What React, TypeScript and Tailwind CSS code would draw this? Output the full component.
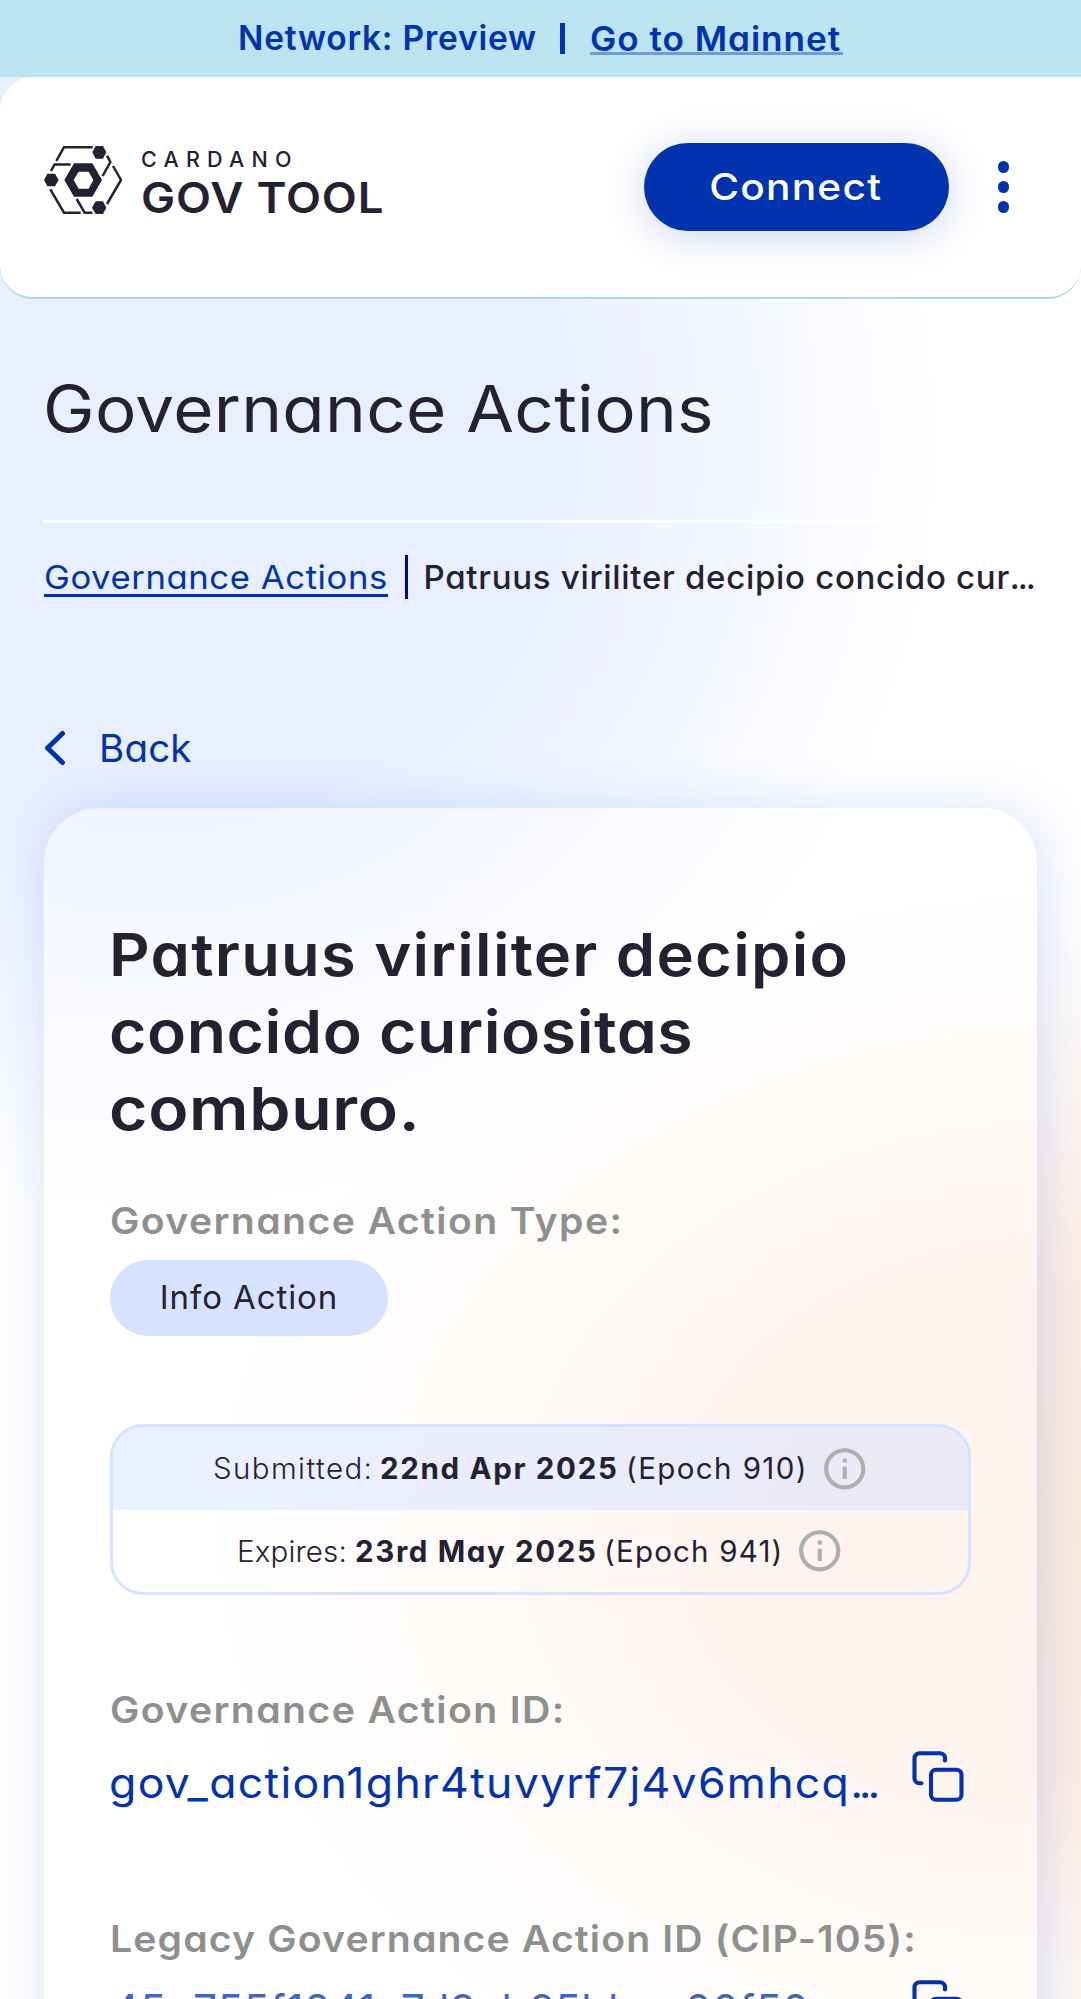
import React from "react";

function Logo() {
  return (
    <svg className="h-[68px] w-[78px]" viewBox="42 48 234 204" fill="none" stroke="#242232" strokeWidth="7.5">
      <path d="M79 93 102 51.5H188M63 123 73.500 103.500H122M61 178 102 248H152M140 207 164 248H187M231 77 241 96 218 138M249 108 273 150 231 222" />
      <g fill="#242232" stroke="none">
        <path d="M187 67 197 48H219L229 67 219 86H197Z" />
        <path d="M42 150 52 131.500H75L86 150 75 169H52Z" />
        <path d="M186 233 197 213.500H219L229 233 219 252H197Z" />
        <path fillRule="evenodd" d="M103 150 132 100H187L216 150 187 200H132ZM131 150 146 176H176L190 150 176 125H146Z" />
      </g>
    </svg>
  );
}

function InfoIcon() {
  return (
    <svg className="size-[49.5px] shrink-0" viewBox="0 0 24 24" fill="#adaead">
      <path d="M11 7h2v2h-2zm0 4h2v6h-2zm1-9C6.480 2 2 6.480 2 12s4.480 10 10 10 10-4.480 10-10S17.520 2 12 2m0 18c-4.410 0-8-3.590-8-8s3.590-8 8-8 8 3.590 8 8-3.590 8-8 8" />
    </svg>
  );
}

function CopyIcon() {
  return (
    <svg className="h-[51px] w-[52px] shrink-0" viewBox="0 0 52 51" fill="none" stroke="#0033ad" strokeWidth="4.1" strokeLinecap="round">
      <path d="M9.500 32.300H7.500a5 5 0 0 1-5-5V7.300a5 5 0 0 1 5-5H28a5 5 0 0 1 5 5V9.500" />
      <rect x="19" y="18.700" width="30.500" height="30" rx="5" />
    </svg>
  );
}

const LABEL =
  "h-[48px] w-max origin-left scale-x-[1.06] text-[37px] leading-[48px] font-semibold whitespace-nowrap text-[#8e908e]";

export default function App() {
  return (
    <div className="h-[1999px] w-[1081px] overflow-hidden bg-white bg-[radial-gradient(ellipse_790px_770px_at_150px_440px,#e8efff_0%,#e8efff_50%,rgba(232,239,255,0.5)_75%,rgba(232,239,255,0)_100%),radial-gradient(ellipse_860px_640px_at_1070px_1530px,#fdebe1_0%,#feede5_38%,rgba(254,238,230,0.45)_70%,rgba(254,238,230,0)_100%)] font-['Inter',sans-serif] text-[#242232] [font-feature-settings:'cv11','ss03']">
      <div className="flex h-[77px] items-center bg-[#bce3f0] pl-[238px] text-[33.5px] leading-none font-semibold whitespace-nowrap text-[#0033ad]">
        <span className="mt-[1px] w-[322px] tracking-[0.75px]">Network: Preview</span>
        <span className="h-[31px] w-[4.500px] bg-[#0033ad]" />
        <span className="ml-[25px] h-[33px] w-[253px] border-b-[3px] border-[#6f9bd8] leading-[34px]">
          <span className="inline-block origin-left scale-x-[1.05] tracking-[0.900px]">Go to Mainnet</span>
        </span>
      </div>

      <header className="flex h-[222px] items-center rounded-[33px] border-b-2 border-[#add8e6] bg-white px-[44px]">
        <div className="flex -translate-y-[7px] items-center">
          <Logo />
          <div className="ml-[19px] flex flex-col whitespace-nowrap">
            <span className="text-[21.500px] leading-[30px] font-medium tracking-[7.200px]">CARDANO</span>
            <span className="mt-[2px] mb-[-1px] origin-left scale-x-[1.06] text-[43px] leading-[42px] font-semibold tracking-[0.800px]">GOV TOOL</span>
          </div>
        </div>
        <button className="ml-auto h-[88px] w-[305px] rounded-full bg-[#0033ad] text-[37px] font-medium tracking-[1.100px] text-white shadow-[0_5px_42px_rgba(0,51,173,0.2)]">
          <span className="inline-block scale-x-[1.1]">Connect</span>
        </button>
        <div className="mr-[28px] ml-[49px] flex flex-col gap-[8.500px]">
          <i className="size-[11.500px] rounded-full bg-[#0033ad]" />
          <i className="size-[11.500px] rounded-full bg-[#0033ad]" />
          <i className="size-[11.500px] rounded-full bg-[#0033ad]" />
        </div>
      </header>

      <main className="px-[44px] pt-[62px]">
        <h1 className="-ml-px h-[96px] w-max origin-left scale-x-[1.08] text-[64px] leading-[96px] font-normal tracking-[0.300px] whitespace-nowrap">Governance Actions</h1>
        <div className="mt-[63px] h-[3px] bg-white" />
        <nav className="mt-[32px] flex h-[44px] items-center whitespace-nowrap">
          <a className="mt-[2px] h-[38px] w-[344px] border-b-[3px] border-[#0033ad] text-[33px] leading-[37px] text-[#0033ad]">
            <span className="inline-block origin-left scale-x-[1.05] tracking-[0.550px]">Governance Actions</span>
          </a>
          <span className="ml-[17px] h-[44px] w-[2.500px] bg-[#00078c]" />
          <span className="ml-[16px] text-[33px] leading-[44px] font-medium tracking-[0.700px]">
            Patruus viriliter decipio concido cur<span className="tracking-[-2px]">...</span>
          </span>
        </nav>

        <a className="mt-[128px] flex h-[42px] items-center text-[#0033ad]">
          <svg className="h-[36px] w-[22px]" viewBox="0 0 22 36" fill="none" stroke="#0033ad" strokeWidth="5" strokeLinecap="round" strokeLinejoin="round">
            <path d="M18.500 3.500 3.500 18 18.500 32.500" />
          </svg>
          <span className="ml-[33px] text-[38.500px] leading-[42px] tracking-[0.200px]">Back</span>
        </a>

        <section className="mt-[39px] h-[1400px] rounded-[55px] bg-white/40 px-[66px] pt-[108px] shadow-[5px_5px_55px_rgba(47,98,220,0.2)]">
          <h2 className="-ml-px text-[59px] leading-[77px] font-semibold whitespace-nowrap">
            <span className="block origin-left scale-x-[1.07] tracking-[1.200px]">Patruus viriliter decipio</span>
            <span className="block origin-left scale-x-[1.09] tracking-[0.500px]">concido curiositas</span>
            <span className="block origin-left scale-x-[1.12] tracking-[0.600px]">comburo.</span>
          </h2>
          <p className={`mt-[50px] tracking-[1.300px] ${LABEL}`}>Governance Action Type:</p>
          <div className="mt-[15px] flex h-[76px] w-[278px] items-center justify-center rounded-full bg-[#d6e2ff] text-[33px] tracking-[0.900px] whitespace-nowrap">
            Info Action
          </div>

          <div className="mt-[88px] h-[171px] overflow-hidden rounded-[33px] border-[3px] border-[#d6e2ff] text-[29.500px] whitespace-nowrap">
            <div className="flex h-[83px] items-center bg-[#d6e2ff]/50 pl-[100px]">
              <span className="w-[167px] font-light tracking-[1.400px]">Submitted:</span>
              <b className="w-[246px] font-bold tracking-[1.680px]">22nd Apr 2025</b>
              <span className="w-[194px] tracking-[1.400px]">(Epoch 910)</span>
              <InfoIcon />
            </div>
            <div className="flex h-[82px] items-center pl-[124px]">
              <span className="w-[118px] font-light tracking-[0.160px]">Expires:</span>
              <b className="w-[249px] font-bold tracking-[1.630px]">23rd May 2025</b>
              <span className="w-[191px] tracking-[1.200px]">(Epoch 941)</span>
              <InfoIcon />
            </div>
          </div>

          <p className={`mt-[91px] tracking-[1.300px] ${LABEL}`}>Governance Action ID:</p>
          <div className="mt-[17px] flex h-[58px] justify-between pr-[7px] text-[#0033ad]">
            <span className="-ml-px origin-left scale-x-[1.05] text-[42.500px] leading-[64px] tracking-[1.200px] whitespace-nowrap">
              gov_action1ghr4tuvyrf7j4v6mhcq<span className="tracking-[-4px]">...</span>
            </span>
            <CopyIcon />
          </div>
          <p className={`mt-[106px] tracking-[1.050px] ${LABEL}`}>Legacy Governance Action ID (CIP-105):</p>
          <div className="mt-[17px] flex h-[58px] justify-between pr-[7px] text-[#0033ad]">
            <span className="pl-[2px] text-[42.500px] leading-[59px] tracking-[0.550px] whitespace-nowrap opacity-75">
              45a755f1841c7d9cb65bbec00f50...
            </span>
            <CopyIcon />
          </div>
        </section>
      </main>
    </div>
  );
}
